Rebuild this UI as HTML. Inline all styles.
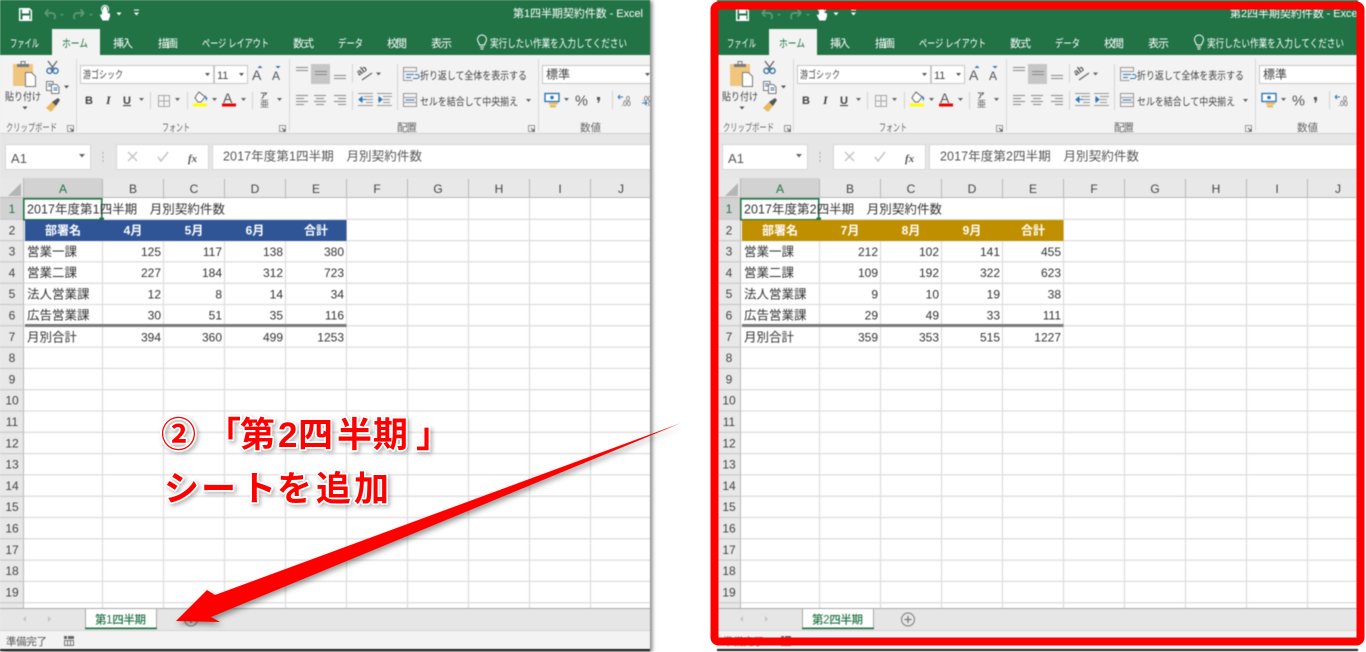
<!DOCTYPE html>
<html lang="ja"><head><meta charset="utf-8"><title>第2四半期シートを追加</title>
<style>
html,body{margin:0;padding:0;width:1366px;height:652px;overflow:hidden;background:#fff}
svg{position:absolute;display:block;overflow:hidden}
.win{font-family:"Liberation Sans","Noto Sans CJK JP",sans-serif;font-size:11px;fill:#444;filter:blur(.5px)}
.tab{fill:#fff;font-size:11px}
.rb{fill:#444;font-size:10.5px}
.lb{fill:#666;font-size:10.5px}
.fm{fill:#555;font-size:12.5px}
.rn{fill:#444;font-size:12px;text-anchor:middle}
.c{fill:#333;font-size:12.5px}
.n{fill:#333;font-size:12px;text-anchor:end}
.h{fill:#fff;font-size:12px;font-weight:700;text-anchor:middle}
.ann{font-family:"Liberation Sans","Noto Sans CJK JP",sans-serif;font-weight:700;font-size:35px;fill:#f00;stroke:#fff;stroke-width:3.5px;paint-order:stroke;stroke-linejoin:round;filter:drop-shadow(2px 2px 2px rgba(0,0,0,.28))}
</style></head><body>
<svg width="0" height="0" style="position:absolute"><defs>
<symbol id="chrome" viewBox="0 0 652 652" width="652" height="652">
<rect width="650" height="650" fill="#fff"/>
<rect width="650" height="55" fill="#217346"/>
<rect x="52" y="29" width="48" height="27" fill="#f3f3f3"/>
<rect y="55" width="650" height="79" fill="#f3f3f3"/>
<rect y="133" width="650" height="45" fill="#e6e6e6"/>
<path d="M0 133.500H650" stroke="#d0d0d0"/>
<!-- QAT -->
<path d="M19.700 8.700h9.600l2 2v9.600h-11.600z" fill="none" stroke="#fff" stroke-width="1.500"/>
<path d="M22 9h7v4.500h-7zM22.500 15.500h7V20h-7z" fill="#fff"/>
<path d="M45 13l3.500-3.500M45 13l3.500 3.500M45 13h7a3.500 3.500 0 0 1 2 6" fill="none" stroke="#5f9a79" stroke-width="1.700"/>
<path d="M84 13l-3.500-3.500M84 13l-3.500 3.500M84 13h-7a3.500 3.500 0 0 0-2 6" fill="none" stroke="#5f9a79" stroke-width="1.700"/>
<path d="M60 14l4 0-2 2zM89 14l4 0-2 2z" fill="#5f9a79"/>
<path d="M103 8.500a2 2 0 0 1 4 0v4l3 1v3l-1.500 4h-6l-3-6 2 .5z" fill="#fff"/><circle cx="105" cy="9" r="3.600" fill="none" stroke="#fff"/>
<path d="M116.500 12.500h5l-2.500 3zM134 12.500h5l-2.500 3zM134 9.500h5v1h-5z" fill="#fff"/>
<!-- bulb -->
<path d="M479.500 45c0-2-2-3-2-5.500a4.500 4.500 0 0 1 9 0c0 2.500-2 3.500-2 5.500zM480 47h4M480.500 49h3" fill="none" stroke="#fff"/>
<!-- clipboard -->
<path d="M13 64h20v10h-8v12H13z" fill="#f0c67f"/><path d="M17 64h12v3H17z" fill="#7a7a7a"/><path d="M21 61.500h4v3h-4z" fill="none" stroke="#7a7a7a"/>
<path d="M25.500 72.500h6l4 4v10h-10z" fill="#fff" stroke="#777"/>
<path d="M22.500 106.500h5l-2.500 3z" fill="#555"/>
<path d="M48 61l6.500 9M57 61l-6.500 9" stroke="#666" stroke-width="1.300" fill="none"/><circle cx="49.500" cy="70.800" r="2.600" fill="none" stroke="#2e6da8" stroke-width="1.300"/><circle cx="55.500" cy="70.800" r="2.600" fill="none" stroke="#2e6da8" stroke-width="1.300"/>
<path d="M46.500 81.500h6.500v9h-6.500z" fill="#fff" stroke="#777"/><path d="M51.500 84.500h5l2.500 2.500v6.500h-7.500z" fill="#fff" stroke="#777"/><path d="M48 84h3M48 86h3M53.500 88h4M53.500 90h4" stroke="#2e6da8"/>
<path d="M64 85.500h5l-2.500 3z" fill="#555"/>
<path d="M46 108l6-6 4 4-5 6z" fill="#e9b95f"/><path d="M52 102l6-4 2 2-4 6z" fill="#555"/>
<path d="M67.500 125.500h6v6h-6z" fill="none" stroke="#9a9a9a"/><path d="M70 128l3 3M71 131h2v-2" stroke="#666" fill="none"/>
<!-- separators -->
<path d="M76.500 59v72M289.500 59v72M538.500 59v72" stroke="#d8d8d8" fill="none"/>
<path d="M150.500 92v17M187.500 92v17M252.500 92v17M352.500 64v19M352.500 91v19M397.500 64v46M612.500 91v18" stroke="#d4d4d4" fill="none"/>
<!-- font combos -->
<rect x="80.500" y="65.500" width="133" height="18" fill="#fff" stroke="#c6c6c6"/>
<rect x="214.500" y="65.500" width="33" height="18" fill="#fff" stroke="#c6c6c6"/>
<path d="M205 73h5l-2.500 3zM239 73h5l-2.500 3z" fill="#555"/>
<path d="M139 98h5l-2.500 3zM175 98h5l-2.500 3zM212 98h5l-2.500 3zM241 98h5l-2.500 3zM277 98h5l-2.500 3z" fill="#666"/>
<path d="M260 65.500l2.500 2.500h-5zM278 68.500l2.500-2.500h-5z" fill="#2e75b6"/>
<!-- borders -->
<path d="M158.500 95.500h11v11h-11zM164 95.500v11M158.500 101h11" fill="none" stroke="#a8a8a8"/>
<!-- fill colour -->
<path d="M196 96l3-4 6 5-4 5h-3l-3-4z" fill="#fff" stroke="#666"/><path d="M205 95l2.500 3.500-1.500 2.500z" fill="#2e75b6"/><rect x="193" y="103.500" width="14" height="3" fill="#ff0"/>
<rect x="222" y="103.500" width="14" height="3" fill="#e00"/>
<!-- vertical align -->
<rect x="311" y="64" width="19" height="20" fill="#c6c6c6"/>
<path d="M296 67.500h12M296 70.500h12M315 71.500h12M315 74.500h12M334 75.500h12M334 78.500h12" stroke="#888" fill="none"/>
<path d="M296 95.500h12M296 98.500h8M296 101.500h12M296 104.500h8M314 95.500h12M316 98.500h8M314 101.500h12M316 104.500h8M334 95.500h12M338 98.500h8M334 101.500h12M338 104.500h8" stroke="#888" fill="none"/>
<!-- orientation -->
<path d="M362 80l10-7" stroke="#666" stroke-width="1.300"/><path d="M376 72.500h5l-2.500 3z" fill="#666"/>
<!-- indents -->
<path d="M364 96.500h9M366 99.500h7M366 102.500h7M358 105.500h15M358 93.500h15M383 96.500h9M383 99.500h7M383 102.500h7M377 105.500h15M377 93.500h15" stroke="#999" fill="none"/>
<path d="M359 99.500l3-2.500v5zM362 99.500h4" stroke="#2e75b6" fill="#2e75b6"/>
<path d="M382 99.500l-3-2.500v5zM378 99.500h4" stroke="#2e75b6" fill="#2e75b6"/>
<!-- wrap -->
<path d="M403.500 67.500h13v4h-13zM403.500 71.500v9h9" fill="none" stroke="#999"/><path d="M406 74.500h8M406 77.500h5" stroke="#2e75b6"/><path d="M415 74.500h2a2 2 0 0 1 0 4h-4" stroke="#2e75b6" fill="none"/>
<!-- merge -->
<path d="M403.500 93.500h13v13h-13zM403.500 97.500h13M403.500 102.500h13" fill="none" stroke="#999"/><path d="M405.500 100h9" stroke="#2e75b6"/><path d="M526 99h5l-2.500 3z" fill="#666"/>
<!-- launchers -->
<path d="M279.500 125.500h6v6h-6zM528.500 125.500h6v6h-6z" fill="none" stroke="#9a9a9a"/>
<path d="M282 128l3 3M283 131h2v-2M531 128l3 3M532 131h2v-2" stroke="#666" fill="none"/>
<!-- number -->
<rect x="542.500" y="65.500" width="120" height="18" fill="#fff" stroke="#c6c6c6"/>
<path d="M645 73h5l-2.500 3z" fill="#555"/>
<rect x="545" y="93.500" width="14" height="8" fill="#fff" stroke="#2e75b6" stroke-width="1.400"/><circle cx="552" cy="97.500" r="1.800" fill="#2e75b6"/>
<path d="M549 102.500h9v2h-9zM550 105h6v2.500h-6z" fill="#e9b95f"/>
<path d="M564 98h5l-2.500 3z" fill="#666"/>
<path d="M597 97h3v3l-1.500 3-1-.5 1-2.500h-1.500z" fill="#555"/>
<path d="M618 97h5M618 97l2-2M618 97l2 2M642 103h5M647 103l-2-2M647 103l-2 2" stroke="#2e75b6" fill="none"/>
<!-- formula bar -->
<rect x="5.500" y="144.500" width="85" height="25" fill="#fff" stroke="#d6d6d6"/>
<path d="M79 154h6l-3 3.500z" fill="#666"/>
<path d="M103 152v2M103 156v2M103 160v2" stroke="#aaa"/>
<rect x="116.500" y="144.500" width="92" height="25" fill="#fff" stroke="#d6d6d6"/>
<rect x="212.500" y="144.500" width="440" height="25" fill="#fff" stroke="#d6d6d6"/>
<path d="M128 152l9 9M137 152l-9 9" stroke="#c4c4c4" stroke-width="1.500" fill="none"/>
<path d="M158 157l3 4 7-9" stroke="#c4c4c4" stroke-width="1.500" fill="none"/>
<!-- sheet -->
<rect y="178" width="650" height="20" fill="#e8e8e8"/>
<rect y="198" width="24" height="410" fill="#e8e8e8"/>
<rect x="24" y="178" width="78" height="20" fill="#d2d2d2"/>
<rect y="198" width="24" height="21.300" fill="#d2d2d2"/>
<path d="M8 196L21 183V196z" fill="#b5b5b5"/>
<path d="M102.500 179v19M163.500 179v19M224.500 179v19M285.500 179v19M346.500 179v19M407.500 179v19M468.500 179v19M529.500 179v19M590.500 179v19M0 197.500H650M23.500 178V608" stroke="#b8b8b8" fill="none"/>
<path d="M0 219.300h24M0 240.600h24M0 261.900h24M0 283.200h24M0 304.500h24M0 325.800h24M0 347.100h24M0 368.400h24M0 389.700h24M0 411h24M0 432.300h24M0 453.600h24M0 474.900h24M0 496.200h24M0 517.500h24M0 538.800h24M0 560.100h24M0 581.400h24M0 602.700h24" stroke="#c4c4c4" fill="none"/>
<path d="M24 219.300H650M24 240.600H650M24 261.900H650M24 283.200H650M24 304.500H650M24 325.800H650M24 347.100H650M24 368.400H650M24 389.700H650M24 411H650M24 432.300H650M24 453.600H650M24 474.900H650M24 496.200H650M24 517.500H650M24 538.800H650M24 560.100H650M24 581.400H650M24 602.700H650M102.500 198V608M163.500 198V608M224.500 198V608M285.500 198V608M346.500 198V608M407.500 198V608M468.500 198V608M529.500 198V608M590.500 198V608" stroke="#dedede" stroke-width="1.300" fill="none"/>
<rect x="24" y="199" width="322" height="20" fill="#fff"/>
<path d="M347 198v22" stroke="#dedede"/>
<rect x="25" y="324" width="321.500" height="3" fill="#7a7a7a"/>
<rect x="23.800" y="198.800" width="78" height="21" fill="none" stroke="#217346" stroke-width="1.600"/>
<rect x="99.500" y="217.500" width="4.500" height="4.500" fill="#217346"/>
<!-- tabs -->
<rect y="608" width="650" height="23" fill="#e6e6e6"/>
<path d="M0 608.500H85M156 608.500H650" stroke="#a8a8a8"/>
<rect x="85.500" y="608" width="71" height="21" fill="#fff"/>
<path d="M85.500 608v20M156.500 608v20M85.500 608.500h71" stroke="#a8a8a8" fill="none"/>
<rect x="85" y="627.500" width="72" height="1.700" fill="#217346"/>
<path d="M26 616v6l-3-3zM48 616v6l3-3z" fill="#c4c4c4"/>
<circle cx="191" cy="619.500" r="6.500" fill="none" stroke="#8c8c8c" stroke-width="1.200"/><path d="M187.500 619.500h7M191 616v7" stroke="#777" stroke-width="1.300"/>
<rect y="631" width="650" height="18" fill="#f3f3f3"/><path d="M0 630.500H650" stroke="#d4d4d4"/>
<path d="M64 636h3v3h-3zM68 636h6v3h-6z" fill="#666"/><path d="M64.500 640.500h9v5h-9zM67.500 640.500v5M70.500 640.500v5" fill="none" stroke="#777"/>
<rect y="649" width="650" height="2" fill="#1c1c1c"/>
</symbol>
</defs></svg>

<!-- LEFT WINDOW -->
<svg class="win" style="left:0;top:0;box-shadow:2px 1px 4px rgba(0,0,0,.55)" width="650" height="651" viewBox="0 0 650 651">
<use href="#chrome"/>
<text class="tab" x="513" y="17" textLength="130">第1四半期契約件数 - Excel</text>
<text class="tab" x="10" y="47" textLength="29" lengthAdjust="spacingAndGlyphs">ファイル</text>
<text x="62" y="47" textLength="26" lengthAdjust="spacingAndGlyphs" style="fill:#217346">ホーム</text>
<text class="tab" x="113" y="47" textLength="20">挿入</text>
<text class="tab" x="158" y="47" textLength="20">描画</text>
<text class="tab" x="202" y="47" textLength="67" lengthAdjust="spacingAndGlyphs">ページ レイアウト</text>
<text class="tab" x="293" y="47" textLength="21">数式</text>
<text class="tab" x="338" y="47" textLength="25" lengthAdjust="spacingAndGlyphs">データ</text>
<text class="tab" x="387" y="47" textLength="20">校閲</text>
<text class="tab" x="431" y="47" textLength="21">表示</text>
<text class="tab" x="490" y="47" textLength="137" lengthAdjust="spacingAndGlyphs">実行したい作業を入力してください</text>
<text class="rb" x="5" y="100" textLength="36" lengthAdjust="spacingAndGlyphs">貼り付け</text>
<text class="lb" x="6" y="131" textLength="51" lengthAdjust="spacingAndGlyphs">クリップボード</text>
<text class="lb" x="162" y="131" textLength="28" lengthAdjust="spacingAndGlyphs">フォント</text>
<text class="lb" x="397" y="131" textLength="20">配置</text>
<text class="lb" x="580" y="131" textLength="21">数値</text>
<text class="rb" x="83" y="78" textLength="40" lengthAdjust="spacingAndGlyphs">游ゴシック</text>
<text class="rb" x="217" y="79" style="font-size:11px">11</text>
<text x="252" y="80" style="font-size:14px;fill:#555">A</text>
<text x="272" y="80" style="font-size:12px;fill:#555">A</text>
<text x="85" y="104" style="font-weight:700;font-size:11px">B</text>
<text x="106" y="104" style="font-style:italic;font-family:'Liberation Serif',serif;font-weight:700;font-size:12px">I</text>
<text x="123" y="104" style="font-weight:700;font-size:11px;text-decoration:underline">U</text>
<text x="223" y="103" style="font-size:14px;fill:#555">A</text>
<text x="260" y="98" style="font-size:7.500px;font-weight:700;fill:#555">ア</text>
<text x="260" y="107" style="font-size:9px;fill:#666">亜</text>
<text transform="translate(359 76) rotate(-35)" style="font-size:9px;fill:#555;font-weight:700">ab</text>
<text x="546" y="78.500" style="font-size:12px;fill:#444">標準</text>
<text class="rb" x="420" y="79" textLength="107" lengthAdjust="spacingAndGlyphs">折り返して全体を表示する</text>
<text class="rb" x="420" y="105" textLength="98" lengthAdjust="spacingAndGlyphs">セルを結合して中央揃え</text>
<text x="575" y="105.500" style="font-size:14.500px;fill:#555">%</text>
<text x="624" y="101" style="font-size:7px;fill:#555">.0</text><text x="621" y="106" style="font-size:7px;fill:#555">.00</text>
<text x="642" y="101" style="font-size:7px;fill:#555">.00</text><text x="646" y="106" style="font-size:7px;fill:#555">.0</text>
<text x="188" y="162" style="font-family:'Liberation Serif',serif;font-style:italic;font-weight:700;font-size:11px;fill:#555">fx</text>
<text x="11" y="163" style="font-size:13px;fill:#555" textLength="16">A1</text>
<text class="fm" x="223" y="160.500" textLength="199">2017年度第1四半期　月別契約件数</text>
<text class="rn" x="63" y="193" style="fill:#217346">A</text><text class="rn" x="133" y="193">B</text><text class="rn" x="194" y="193">C</text><text class="rn" x="255" y="193">D</text><text class="rn" x="316" y="193">E</text><text class="rn" x="377" y="193">F</text><text class="rn" x="438" y="193">G</text><text class="rn" x="499" y="193">H</text><text class="rn" x="560" y="193">I</text><text class="rn" x="621" y="193">J</text>
<text class="rn" x="12" y="213" style="fill:#217346">1</text><text class="rn" x="12" y="234.300">2</text><text class="rn" x="12" y="255.600">3</text><text class="rn" x="12" y="276.900">4</text><text class="rn" x="12" y="298.200">5</text><text class="rn" x="12" y="319.500">6</text><text class="rn" x="12" y="340.800">7</text><text class="rn" x="12" y="362.100">8</text><text class="rn" x="12" y="383.400">9</text><text class="rn" x="12" y="404.700">10</text><text class="rn" x="12" y="426">11</text><text class="rn" x="12" y="447.300">12</text><text class="rn" x="12" y="468.600">13</text><text class="rn" x="12" y="489.900">14</text><text class="rn" x="12" y="511.200">15</text><text class="rn" x="12" y="532.500">16</text><text class="rn" x="12" y="553.800">17</text><text class="rn" x="12" y="575.100">18</text><text class="rn" x="12" y="596.400">19</text>
<text class="c" x="27" y="213.500" textLength="198">2017年度第1四半期　月別契約件数</text>
<rect x="25" y="220" width="321.500" height="21" fill="#2f5597"/>
<text class="h" x="63" y="234.500">部署名</text><text class="h" x="133" y="234.500">4月</text><text class="h" x="194" y="234.500">5月</text><text class="h" x="255" y="234.500">6月</text><text class="h" x="316" y="234.500">合計</text>
<text class="c" x="27" y="256">営業一課</text><text class="n" x="161" y="256">125</text><text class="n" x="222" y="256">117</text><text class="n" x="283" y="256">138</text><text class="n" x="344" y="256">380</text>
<text class="c" x="27" y="277">営業二課</text><text class="n" x="161" y="277">227</text><text class="n" x="222" y="277">184</text><text class="n" x="283" y="277">312</text><text class="n" x="344" y="277">723</text>
<text class="c" x="27" y="298.500">法人営業課</text><text class="n" x="161" y="298.500">12</text><text class="n" x="222" y="298.500">8</text><text class="n" x="283" y="298.500">14</text><text class="n" x="344" y="298.500">34</text>
<text class="c" x="27" y="319.500">広告営業課</text><text class="n" x="161" y="319.500">30</text><text class="n" x="222" y="319.500">51</text><text class="n" x="283" y="319.500">35</text><text class="n" x="344" y="319.500">116</text>
<text class="c" x="27" y="341.500">月別合計</text><text class="n" x="161" y="341.500">394</text><text class="n" x="222" y="341.500">360</text><text class="n" x="283" y="341.500">499</text><text class="n" x="344" y="341.500">1253</text>
<text x="95" y="623.500" textLength="51" style="fill:#217346;font-size:11.500px;font-weight:500">第1四半期</text>
<text x="6" y="645" textLength="41" style="fill:#555;font-size:10.500px">準備完了</text>
</svg>

<!-- RIGHT WINDOW -->
<svg class="win" style="left:717px;top:0" width="641" height="651" viewBox="0 0 641 651">
<use href="#chrome"/>
<text class="tab" x="513" y="17" textLength="130">第2四半期契約件数 - Excel</text>
<text class="tab" x="10" y="47" textLength="29" lengthAdjust="spacingAndGlyphs">ファイル</text>
<text x="62" y="47" textLength="26" lengthAdjust="spacingAndGlyphs" style="fill:#217346">ホーム</text>
<text class="tab" x="113" y="47" textLength="20">挿入</text>
<text class="tab" x="158" y="47" textLength="20">描画</text>
<text class="tab" x="202" y="47" textLength="67" lengthAdjust="spacingAndGlyphs">ページ レイアウト</text>
<text class="tab" x="293" y="47" textLength="21">数式</text>
<text class="tab" x="338" y="47" textLength="25" lengthAdjust="spacingAndGlyphs">データ</text>
<text class="tab" x="387" y="47" textLength="20">校閲</text>
<text class="tab" x="431" y="47" textLength="21">表示</text>
<text class="tab" x="490" y="47" textLength="137" lengthAdjust="spacingAndGlyphs">実行したい作業を入力してください</text>
<text class="rb" x="5" y="100" textLength="36" lengthAdjust="spacingAndGlyphs">貼り付け</text>
<text class="lb" x="6" y="131" textLength="51" lengthAdjust="spacingAndGlyphs">クリップボード</text>
<text class="lb" x="162" y="131" textLength="28" lengthAdjust="spacingAndGlyphs">フォント</text>
<text class="lb" x="397" y="131" textLength="20">配置</text>
<text class="lb" x="580" y="131" textLength="21">数値</text>
<text class="rb" x="83" y="78" textLength="40" lengthAdjust="spacingAndGlyphs">游ゴシック</text>
<text class="rb" x="217" y="79" style="font-size:11px">11</text>
<text x="252" y="80" style="font-size:14px;fill:#555">A</text>
<text x="272" y="80" style="font-size:12px;fill:#555">A</text>
<text x="85" y="104" style="font-weight:700;font-size:11px">B</text>
<text x="106" y="104" style="font-style:italic;font-family:'Liberation Serif',serif;font-weight:700;font-size:12px">I</text>
<text x="123" y="104" style="font-weight:700;font-size:11px;text-decoration:underline">U</text>
<text x="223" y="103" style="font-size:14px;fill:#555">A</text>
<text x="260" y="98" style="font-size:7.500px;font-weight:700;fill:#555">ア</text>
<text x="260" y="107" style="font-size:9px;fill:#666">亜</text>
<text transform="translate(359 76) rotate(-35)" style="font-size:9px;fill:#555;font-weight:700">ab</text>
<text x="546" y="78.500" style="font-size:12px;fill:#444">標準</text>
<text class="rb" x="420" y="79" textLength="107" lengthAdjust="spacingAndGlyphs">折り返して全体を表示する</text>
<text class="rb" x="420" y="105" textLength="98" lengthAdjust="spacingAndGlyphs">セルを結合して中央揃え</text>
<text x="575" y="105.500" style="font-size:14.500px;fill:#555">%</text>
<text x="624" y="101" style="font-size:7px;fill:#555">.0</text><text x="621" y="106" style="font-size:7px;fill:#555">.00</text>
<text x="188" y="162" style="font-family:'Liberation Serif',serif;font-style:italic;font-weight:700;font-size:11px;fill:#555">fx</text>
<text x="11" y="163" style="font-size:13px;fill:#555" textLength="16">A1</text>
<text class="fm" x="223" y="160.500" textLength="199">2017年度第2四半期　月別契約件数</text>
<text class="rn" x="63" y="193" style="fill:#217346">A</text><text class="rn" x="133" y="193">B</text><text class="rn" x="194" y="193">C</text><text class="rn" x="255" y="193">D</text><text class="rn" x="316" y="193">E</text><text class="rn" x="377" y="193">F</text><text class="rn" x="438" y="193">G</text><text class="rn" x="499" y="193">H</text><text class="rn" x="560" y="193">I</text><text class="rn" x="621" y="193">J</text>
<text class="rn" x="12" y="213" style="fill:#217346">1</text><text class="rn" x="12" y="234.300">2</text><text class="rn" x="12" y="255.600">3</text><text class="rn" x="12" y="276.900">4</text><text class="rn" x="12" y="298.200">5</text><text class="rn" x="12" y="319.500">6</text><text class="rn" x="12" y="340.800">7</text><text class="rn" x="12" y="362.100">8</text><text class="rn" x="12" y="383.400">9</text><text class="rn" x="12" y="404.700">10</text><text class="rn" x="12" y="426">11</text><text class="rn" x="12" y="447.300">12</text><text class="rn" x="12" y="468.600">13</text><text class="rn" x="12" y="489.900">14</text><text class="rn" x="12" y="511.200">15</text><text class="rn" x="12" y="532.500">16</text><text class="rn" x="12" y="553.800">17</text><text class="rn" x="12" y="575.100">18</text><text class="rn" x="12" y="596.400">19</text>
<text class="c" x="27" y="213.500" textLength="198">2017年度第2四半期　月別契約件数</text>
<rect x="25" y="220" width="321.500" height="21" fill="#bf8f00"/>
<text class="h" x="63" y="234.500">部署名</text><text class="h" x="133" y="234.500">7月</text><text class="h" x="194" y="234.500">8月</text><text class="h" x="255" y="234.500">9月</text><text class="h" x="316" y="234.500">合計</text>
<text class="c" x="27" y="256">営業一課</text><text class="n" x="161" y="256">212</text><text class="n" x="222" y="256">102</text><text class="n" x="283" y="256">141</text><text class="n" x="344" y="256">455</text>
<text class="c" x="27" y="277">営業二課</text><text class="n" x="161" y="277">109</text><text class="n" x="222" y="277">192</text><text class="n" x="283" y="277">322</text><text class="n" x="344" y="277">623</text>
<text class="c" x="27" y="298.500">法人営業課</text><text class="n" x="161" y="298.500">9</text><text class="n" x="222" y="298.500">10</text><text class="n" x="283" y="298.500">19</text><text class="n" x="344" y="298.500">38</text>
<text class="c" x="27" y="319.500">広告営業課</text><text class="n" x="161" y="319.500">29</text><text class="n" x="222" y="319.500">49</text><text class="n" x="283" y="319.500">33</text><text class="n" x="344" y="319.500">111</text>
<text class="c" x="27" y="341.500">月別合計</text><text class="n" x="161" y="341.500">359</text><text class="n" x="222" y="341.500">353</text><text class="n" x="283" y="341.500">515</text><text class="n" x="344" y="341.500">1227</text>
<text x="95" y="623.500" textLength="51" style="fill:#217346;font-size:11.500px;font-weight:500">第2四半期</text>
<text x="6" y="645" textLength="41" style="fill:#555;font-size:10.500px">準備完了</text>
</svg>

<!-- OVERLAY -->
<svg style="left:0;top:0" width="1366" height="652" viewBox="0 0 1366 652">
<polygon points="681,423 215,595 207,590 176,621 220,622 211,617" fill="#f00" style="filter:drop-shadow(2px 3px 3px rgba(0,0,0,.4))"/>
<text class="ann" x="161 206 240 278 298 337 373 416" y="447">②「第2四半期」</text>
<text class="ann" x="164 201 241 277 316 354" y="501">シートを追加</text>
<rect x="714.500" y="5.500" width="646" height="636" rx="4" fill="none" stroke="#f00" stroke-width="8"/>
</svg>
</body></html>
